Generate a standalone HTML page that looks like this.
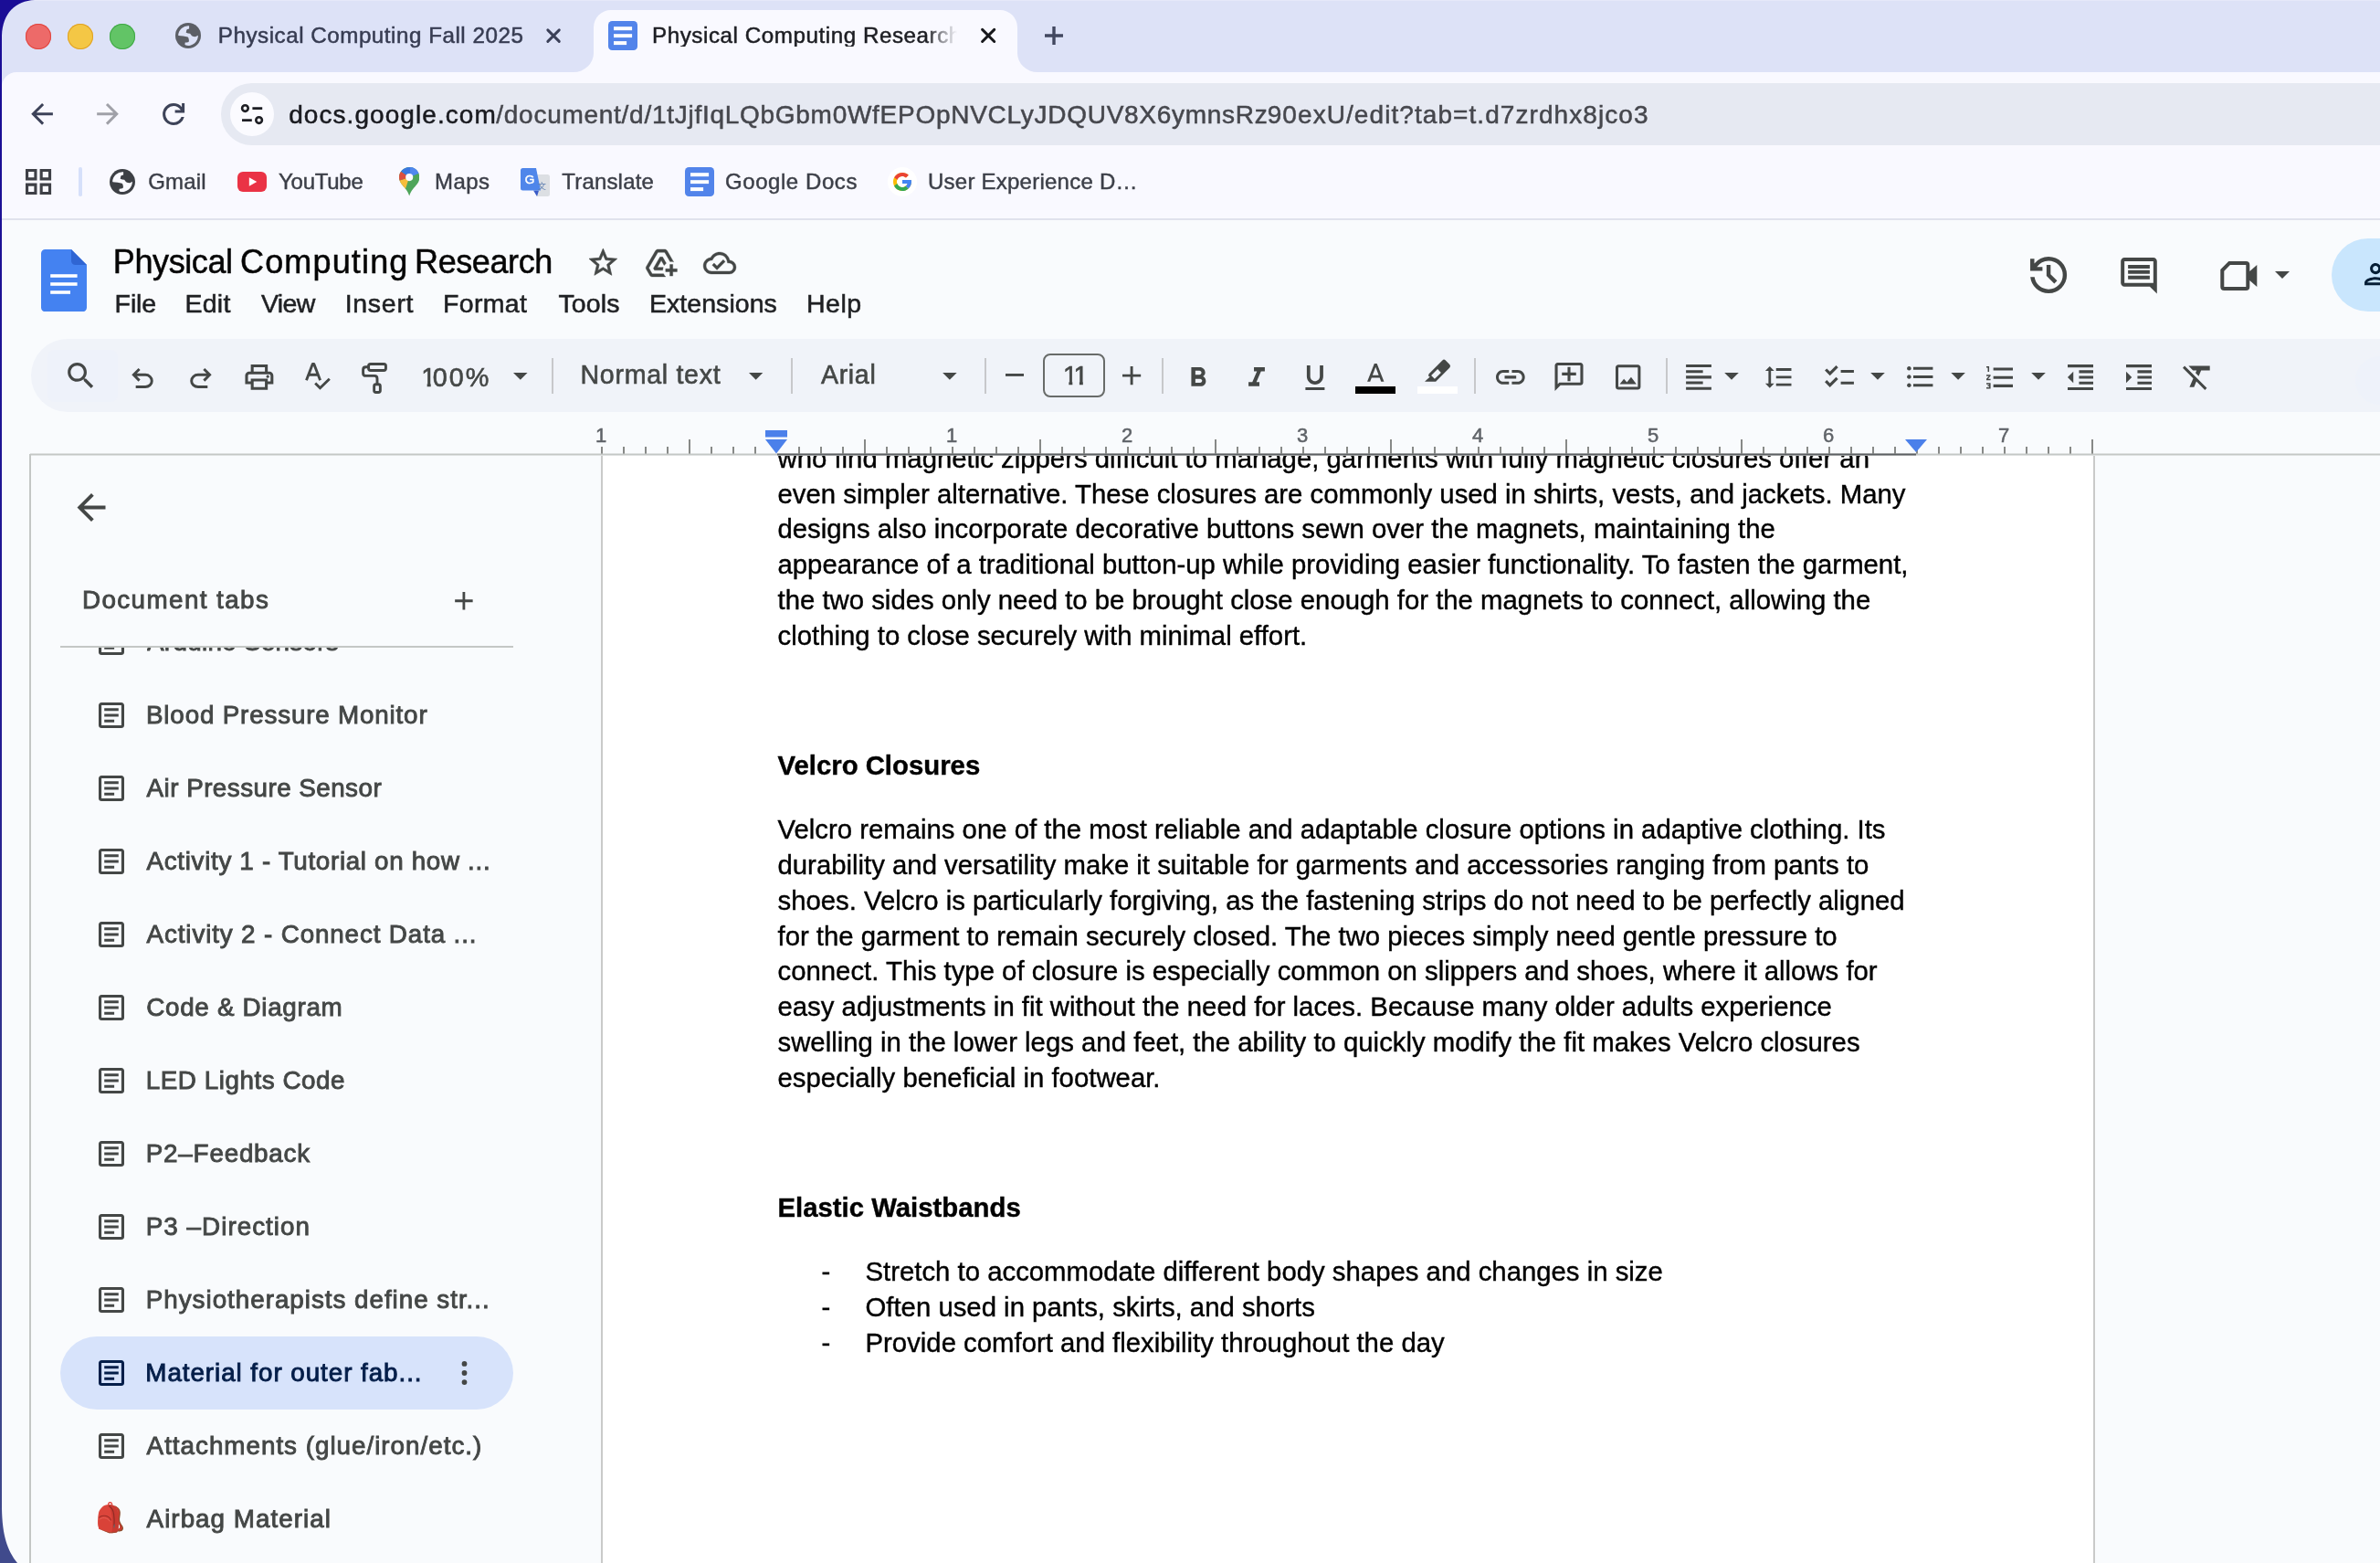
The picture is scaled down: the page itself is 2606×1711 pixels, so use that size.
<!DOCTYPE html>
<html lang="en"><head><meta charset="utf-8"><title>Physical Computing Research - Google Docs</title>
<style>
html,body{margin:0;padding:0}
body{width:2606px;height:1711px;overflow:hidden;position:relative;background:#f9fbfd;font-family:"Liberation Sans",sans-serif;}
.a{position:absolute}
.t{position:absolute;white-space:pre;line-height:1;font-family:"Liberation Sans",sans-serif;z-index:3}
.ic{position:absolute;z-index:3;overflow:visible}
svg{display:block}
.sep{top:391.500px;width:2px;height:39px;background:#c7c8cb}
#root{position:absolute;left:0;top:0;width:2606px;height:1711px;overflow:hidden;will-change:transform}

</style></head>
<body>
<div id="root">
<!-- chrome frame -->
<div class="a" style="left:0;top:0;width:2606px;height:110px;background:#dde2f7"></div>
<div class="a" style="left:2px;top:79px;width:2604px;height:162px;background:#f9f9ff;border-top-left-radius:16px"></div>
<!-- active tab -->
<svg class="a" style="left:626px;top:11px" width="512" height="68" viewBox="626 11 512 68"><path d="M628 79 A22 21 0 0 0 650 58 V30 A19 19 0 0 1 669 11 H1095 A19 19 0 0 1 1114 30 V58 A22 21 0 0 0 1136 79 Z" fill="#f9f9ff"/></svg>
<!-- traffic lights -->
<div class="a" style="left:28px;top:26px;width:28px;height:28px;border-radius:50%;background:#ed6a69;box-shadow:inset 0 0 0 1px #e0443e"></div>
<div class="a" style="left:74px;top:26px;width:28px;height:28px;border-radius:50%;background:#f4c745;box-shadow:inset 0 0 0 1px #dfa023"></div>
<div class="a" style="left:120px;top:26px;width:28px;height:28px;border-radius:50%;background:#62c466;box-shadow:inset 0 0 0 1px #3fa845"></div>
<!-- tab2 favicon (docs) -->
<svg class="a" style="left:666px;top:23px" width="32" height="32" viewBox="0 0 32 32"><rect width="32" height="32" rx="4.300" fill="#5284ea"/><rect x="6" y="6.200" width="20.100" height="4" fill="#fff"/><rect x="6" y="14.200" width="20.100" height="3.900" fill="#fff"/><rect x="6" y="22.100" width="14.100" height="4" fill="#fff"/></svg>
<!-- omnibox -->
<div class="a" style="left:242px;top:91px;width:2500px;height:67.500px;border-radius:33.750px;background:#e6e9f2"></div>
<div class="a" style="left:252px;top:101px;width:48px;height:48px;border-radius:50%;background:#fbfbff"></div>
<svg class="a" style="left:262px;top:111px" width="28" height="28" viewBox="262 111 28 28" fill="none" stroke="#1d1e24" stroke-width="2.600"><circle cx="268.400" cy="118.600" r="3.300"/><path d="M276.400 118.600H287.200M265 131.600H275.800"/><circle cx="283.600" cy="131.600" r="3.300"/></svg>
<!-- bookmarks bar -->
<div class="a" style="left:86.200px;top:183px;width:3.600px;height:32px;border-radius:1.800px;background:#d6e0fa"></div>
<div class="a" style="left:2px;top:239px;width:2604px;height:2px;background:#e0e2ec"></div>
<!-- bookmark favicons -->
<svg class="a" style="left:260px;top:188px" width="32" height="22" viewBox="0 0 32 22"><rect width="32" height="22" rx="6" fill="#ea3345"/><path d="M12.800 6.200 L21.300 11 L12.800 15.800Z" fill="#fff"/></svg>
<!-- maps pin -->
<svg class="a" style="left:436.800px;top:183px" width="22.400" height="31.600" viewBox="0 0 22.400 31.600"><defs><clipPath id="pin"><path d="M11.200 0C5 0 0 5 0 11.100c0 2.900 1.100 5.300 2.700 7.500 2.700 3.700 6.600 6.700 8.500 13 1.900-6.300 5.800-9.300 8.500-13 1.600-2.200 2.700-4.600 2.700-7.500C22.400 5 17.400 0 11.200 0z"/></clipPath></defs><g clip-path="url(#pin)"><rect width="22.400" height="31.600" fill="#4ea55a"/><path d="M11.200 11.100L-42.800 29.100L-1.100 48.300Z" fill="#f6bd3b"/><path d="M11.200 11.100L-33.800 -20.900L-42.800 29.100Z" fill="#dd4f3f"/><path d="M11.200 11.100L-33.800 -20.900L11 -30L58.200 -8.900Z" fill="#3a78e0"/><path d="M11.200 11.100L14.500 -20L58.200 -8.900Z" fill="#5088ee"/></g><circle cx="11.200" cy="11.100" r="4.050" fill="#fbfbff"/></svg>
<!-- translate -->
<svg class="a" style="left:570px;top:184px" width="32" height="31" viewBox="0 0 32 31"><path d="M11 7H29.500A2.500 2.500 0 0 1 32 9.500V28.500A2.500 2.500 0 0 1 29.500 31H18Z" fill="#dcdfe3"/><path d="M14 24.500L20 24.500 18 31Z" fill="#3a5bc7"/><path d="M2.500 0H17L22 24.500H2.500A2.500 2.500 0 0 1 0 22V2.500A2.500 2.500 0 0 1 2.500 0Z" fill="#4f86ea"/><text x="4.800" y="17" font-family="Liberation Sans, sans-serif" font-size="13.500" fill="#fff" stroke="#fff" stroke-width=".5">G</text><text x="18.500" y="22.500" font-family="Liberation Sans, Noto Sans CJK SC, sans-serif" font-size="9.500" fill="#5f7fb0">文</text></svg>
<!-- google docs bookmark -->
<svg class="a" style="left:750px;top:183px" width="32" height="32" viewBox="0 0 32 32"><rect width="32" height="32" rx="4.300" fill="#5284ea"/><rect x="6" y="6.200" width="20.100" height="4" fill="#fff"/><rect x="6" y="14.200" width="20.100" height="3.900" fill="#fff"/><rect x="6" y="22.100" width="14.100" height="4" fill="#fff"/></svg>
<!-- google G -->
<svg class="a" style="left:972px;top:183px" width="32" height="32" viewBox="0 0 32 32"><circle cx="16" cy="16" r="16" fill="#fff"/><g transform="translate(4 4) scale(.5)"><path d="M43.611 20.083H42V20H24v8h11.303c-1.649 4.657-6.080 8-11.303 8-6.627 0-12-5.373-12-12s5.373-12 12-12c3.059 0 5.842 1.154 7.961 3.039l5.657-5.657C34.046 6.053 29.268 4 24 4 12.955 4 4 12.955 4 24s8.955 20 20 20 20-8.955 20-20c0-1.341-.138-2.650-.389-3.917z" fill="#fbbc05"/><path d="M6.306 14.691l6.571 4.819C14.655 15.108 18.961 12 24 12c3.059 0 5.842 1.154 7.961 3.039l5.657-5.657C34.046 6.053 29.268 4 24 4 16.318 4 9.656 8.337 6.306 14.691z" fill="#ea4335"/><path d="M24 44c5.166 0 9.860-1.977 13.409-5.192l-6.190-5.238C29.211 35.091 26.715 36 24 36c-5.202 0-9.619-3.317-11.283-7.946l-6.522 5.025C9.505 39.556 16.227 44 24 44z" fill="#34a853"/><path d="M43.611 20.083H42V20H24v8h11.303c-.792 2.237-2.231 4.166-4.087 5.571l6.190 5.238C36.971 39.205 44 34 44 24c0-1.341-.138-2.650-.389-3.917z" fill="#4285f4"/></g></svg>
<!-- docs logo -->
<svg class="a" style="left:45px;top:272.700px" width="50" height="68.300" viewBox="0 0 50 68.300"><path d="M4.500 0H33L50 17V63.800A4.500 4.500 0 0 1 45.500 68.300H4.500A4.500 4.500 0 0 1 0 63.800V4.500A4.500 4.500 0 0 1 4.500 0Z" fill="#4482f1"/><path d="M33 0L50 17H37.500A4.500 4.500 0 0 1 33 12.500Z" fill="#2f65d3"/><rect x="10.200" y="27.200" width="29.400" height="3.600" fill="#fff"/><rect x="10.200" y="36.200" width="29.400" height="3.600" fill="#fff"/><rect x="10.200" y="45.200" width="21.800" height="3.600" fill="#fff"/></svg>
<!-- share button -->
<div class="a" style="left:2553px;top:261px;width:200px;height:80px;border-radius:40px;background:#c9e6fd"></div>
<svg class="ic" style="left:2582.850px;top:281.900px;width:36.300px;height:36.300px" viewBox="0 0 24 24" fill="#051e36"><path d="M12 6c1.100 0 2 .9 2 2s-.9 2-2 2-2-.9-2-2 .9-2 2-2m0 10c2.700 0 5.800 1.290 6 2H6c.230-.720 3.310-2 6-2m0-12C9.790 4 8 5.790 8 8s1.790 4 4 4 4-1.790 4-4-1.790-4-4-4zm0 10c-2.670 0-8 1.340-8 4v2h16v-2c0-2.660-5.330-4-8-4z"/></svg>
<!-- toolbar pill -->
<div class="a" style="left:34px;top:371px;width:2700px;height:80px;border-radius:40px;background:#f0f3f9"></div>
<div class="a" style="left:51.500px;top:383px;width:77px;height:56.500px;border-radius:8px;background:#eef2fa"></div>
<div class="a" style="left:2579px;top:390px;width:100px;height:53px;border-radius:26.500px;background:#eef2fa"></div>
<!-- toolbar separators -->
<div class="a sep" style="left:604px"></div><div class="a sep" style="left:866px"></div><div class="a sep" style="left:1078px"></div><div class="a sep" style="left:1272px"></div><div class="a sep" style="left:1614px"></div><div class="a sep" style="left:1824px"></div>
<!-- font size box -->
<div class="a" style="left:1142px;top:387px;width:68px;height:48px;box-sizing:border-box;border:2px solid #686b69;border-radius:8px"></div>
<!-- text colour / highlight bars -->
<div class="a" style="left:1484px;top:423px;width:44px;height:8px;background:#000"></div>
<div class="a" style="left:1552px;top:423px;width:44px;height:8px;background:#fff"></div>

<!-- page -->
<div class="a" style="left:657.500px;top:498.500px;width:1636.500px;height:1230px;box-sizing:border-box;background:#fff;border-left:2px solid #c9cac9;border-right:2px solid #c9cac9"></div>
<!-- sidebar left border -->
<div class="a" style="left:32px;top:497px;width:2px;height:1220px;background:#c4c7c5"></div>
<!-- sidebar divider -->
<div class="a" style="left:66px;top:707px;width:496px;height:2px;background:#c4c7c5"></div>
<!-- selected tab pill -->
<div class="a" style="left:66px;top:1463px;width:496px;height:80px;border-radius:40px;background:#d7e3fb"></div>
<svg class="a" style="left:0;top:451px;z-index:2" width="2606" height="50" viewBox="0 451 2606 50"><g fill="#7b7d7b"><rect x="658.1" y="489" width="1.800" height="8"/><rect x="682.1" y="489" width="1.800" height="8"/><rect x="706.1" y="489" width="1.800" height="8"/><rect x="730.1" y="489" width="1.800" height="8"/><rect x="754.1" y="481" width="1.800" height="16"/><rect x="778.1" y="489" width="1.800" height="8"/><rect x="802.1" y="489" width="1.800" height="8"/><rect x="826.1" y="489" width="1.800" height="8"/><rect x="874.1" y="489" width="1.800" height="8"/><rect x="898.1" y="489" width="1.800" height="8"/><rect x="922.1" y="489" width="1.800" height="8"/><rect x="946.1" y="481" width="1.800" height="16"/><rect x="970.1" y="489" width="1.800" height="8"/><rect x="994.1" y="489" width="1.800" height="8"/><rect x="1018.1" y="489" width="1.800" height="8"/><rect x="1042.1" y="489" width="1.800" height="8"/><rect x="1066.1" y="489" width="1.800" height="8"/><rect x="1090.1" y="489" width="1.800" height="8"/><rect x="1114.1" y="489" width="1.800" height="8"/><rect x="1138.1" y="481" width="1.800" height="16"/><rect x="1162.1" y="489" width="1.800" height="8"/><rect x="1186.1" y="489" width="1.800" height="8"/><rect x="1210.1" y="489" width="1.800" height="8"/><rect x="1234.1" y="489" width="1.800" height="8"/><rect x="1258.1" y="489" width="1.800" height="8"/><rect x="1282.1" y="489" width="1.800" height="8"/><rect x="1306.1" y="489" width="1.800" height="8"/><rect x="1330.1" y="481" width="1.800" height="16"/><rect x="1354.1" y="489" width="1.800" height="8"/><rect x="1378.1" y="489" width="1.800" height="8"/><rect x="1402.1" y="489" width="1.800" height="8"/><rect x="1426.1" y="489" width="1.800" height="8"/><rect x="1450.1" y="489" width="1.800" height="8"/><rect x="1474.1" y="489" width="1.800" height="8"/><rect x="1498.1" y="489" width="1.800" height="8"/><rect x="1522.1" y="481" width="1.800" height="16"/><rect x="1546.1" y="489" width="1.800" height="8"/><rect x="1570.1" y="489" width="1.800" height="8"/><rect x="1594.1" y="489" width="1.800" height="8"/><rect x="1618.1" y="489" width="1.800" height="8"/><rect x="1642.1" y="489" width="1.800" height="8"/><rect x="1666.1" y="489" width="1.800" height="8"/><rect x="1690.1" y="489" width="1.800" height="8"/><rect x="1714.1" y="481" width="1.800" height="16"/><rect x="1738.1" y="489" width="1.800" height="8"/><rect x="1762.1" y="489" width="1.800" height="8"/><rect x="1786.1" y="489" width="1.800" height="8"/><rect x="1810.1" y="489" width="1.800" height="8"/><rect x="1834.1" y="489" width="1.800" height="8"/><rect x="1858.1" y="489" width="1.800" height="8"/><rect x="1882.1" y="489" width="1.800" height="8"/><rect x="1906.1" y="481" width="1.800" height="16"/><rect x="1930.1" y="489" width="1.800" height="8"/><rect x="1954.1" y="489" width="1.800" height="8"/><rect x="1978.1" y="489" width="1.800" height="8"/><rect x="2002.1" y="489" width="1.800" height="8"/><rect x="2026.1" y="489" width="1.800" height="8"/><rect x="2050.1" y="489" width="1.800" height="8"/><rect x="2074.1" y="489" width="1.800" height="8"/><rect x="2098.1" y="481" width="1.800" height="16"/><rect x="2122.1" y="489" width="1.800" height="8"/><rect x="2146.1" y="489" width="1.800" height="8"/><rect x="2170.1" y="489" width="1.800" height="8"/><rect x="2194.1" y="489" width="1.800" height="8"/><rect x="2218.1" y="489" width="1.800" height="8"/><rect x="2242.1" y="489" width="1.800" height="8"/><rect x="2266.1" y="489" width="1.800" height="8"/><rect x="2290.1" y="481" width="1.800" height="16"/></g><rect x="33" y="496.500" width="2573" height="2" fill="#c4c7c5"/><rect x="851" y="496.500" width="1247" height="2" fill="#5d6063"/><rect x="838" y="471" width="24" height="7.500" fill="#4b80ea"/><path d="M838 481H862L850 496.500Z" fill="#4b80ea"/><path d="M2086 481H2110L2098 495Z" fill="#4b80ea"/></svg>
<!-- backpack emoji substitute -->
<svg class="a" style="left:105px;top:1642px;z-index:3" width="32" height="40" viewBox="0 0 32 40">
<path d="M20.600 6.200C24 7.500 26.600 10 26.800 13.500 27 17 25.600 20 26.200 23c.7 3 3.300 5 3.700 7.300.3 1.700-.5 3-1.600 3.600l-3.800.8-1-2.600c2.300-.7 3.300-1.700 2.600-3.600-1-2.700-3.200-4.800-3.600-8.200-.4-3.300 1.400-6.400.7-9.300-.4-1.500-1.500-2.600-3.200-3.400z" fill="#8a4a2a"/>
<path d="M21.500 7c2.300 1.300 4 3.300 4.200 6 .2 3.400-1.300 6.300-.7 9.600.6 3.200 3.200 5.300 3.600 7.600.2 1.200-.2 2-.9 2.600l-2.400.7-.6-1.700c1.700-.8 2.400-1.800 1.800-3.400-1-2.700-3.300-4.800-3.700-8.200-.4-3.300 1.300-6.300.8-9.100-.3-1.300-1-2.400-2.100-3.200z" fill="#cf3c32"/>
<path d="M13 5.600c-.3-2 .8-3.500 2.500-3.600 1.600-.1 2.700 1 2.800 3l-1.300.3c-.1-1.200-.6-1.900-1.500-1.800-.9.100-1.300.9-1.200 2z" fill="#e2483f"/>
<path d="M6.900 7.800C9 5.700 11.800 4.800 14.600 5c2.500.1 4.800.8 6.400 2.100 1.800 1.600 2.600 4.200 2.900 7 .5 4.600 1 9.400.9 14.100 0 2.700-.4 5.400-1.700 7-2.600.9-5.700 1.300-8.500 1.100L3.400 31.700C2.300 28.800 2 25.800 2.100 22.900c.1-3 .3-6 .9-8.800.5-2.400 2-4.500 3.900-6.300z" fill="#dc453b"/>
<path d="M14.600 5c2.500.1 4.800.8 6.400 2.100 1.800 1.600 2.600 4.200 2.900 7 .5 4.600 1 9.400.9 14.100 0 2.700-.4 5.400-1.700 7-1.800.6-3.900 1-6 1.100.9-4.600 1.300-9.500.9-14.300C17.600 17 16.800 11 14.600 5z" fill="#c83a31"/>
<path d="M14 6.600c3 1.600 5 5 5.600 9 .6 4 .7 8.400.3 12.500" stroke="#8e2a25" stroke-width="1.100" fill="none"/>
<path d="M3.300 19.500c1.500-1.700 4-2.500 6.400-2.200 3.300.4 6 2.300 6.900 5 .8 4 .8 8.300.5 12.300L3.400 31.700C2.400 27.700 2.300 23.400 3.300 19.500z" fill="#d94238"/>
<path d="M3.300 19.500c1.500-1.700 4-2.500 6.400-2.200 3.300.4 6 2.300 6.900 5" stroke="#9c2e28" stroke-width="1.100" fill="none"/>
<path d="M3.800 21.500c1.400-1.400 3.500-2 5.600-1.800 2.700.3 5 1.700 6 3.800" stroke="#e8675c" stroke-width="1" fill="none" opacity=".8"/>
<path d="M19.800 26.500l1.100.2-.5 3.800-1.100-.2z" fill="#60646a"/>
<path d="M3.400 31.700l11.200 4.600c2.800.2 5.900-.2 8.500-1.100l1.200-1.200c-2.500 1.200-6 1.600-9.500 1.300z" fill="#8a4a2a" opacity=".85"/>
</svg>
<!-- desktop edge + window corners -->
<div class="a" style="left:0;top:0;width:2px;height:1711px;z-index:9;background:linear-gradient(180deg,#1a0d96 0%,#231a93 45%,#3a4189 80%,#404a8c 100%)"></div>
<svg class="a" style="left:0;top:0;z-index:9" width="44" height="44" viewBox="0 0 44 44"><path d="M0 0H38C17 1 3 14 2 39V44H0Z" fill="#1a0d96"/></svg>
<svg class="a" style="left:0;top:1651px;z-index:9" width="30" height="60" viewBox="0 0 30 60"><path d="M0 0H2C2.500 30 8 46 19 60H0Z" fill="#404a8c"/></svg>

<!-- custom toolbar icons: spellcheck + paint format -->
<svg class="ic" style="left:330px;top:392px" width="100" height="44" viewBox="330 392 100 44" fill="none" stroke="#444746" stroke-width="2.900">
<path d="M335.500 416.300 L342.300 398.500 H343.800 L350.600 416.300 M338.300 410.300 H347.800" stroke-linejoin="round"/>
<path d="M345.200 419.400 L350.500 424.800 L360.800 414.700"/>
<rect x="403.550" y="398.550" width="18.900" height="6.900" rx="2.200"/>
<path d="M403.500 401.800 H400.600 Q397.600 401.800 397.600 404.800 V408.400 Q397.600 411.400 400.600 411.400 H410 Q413 411.400 413 414.400 V420"/>
<rect x="409.650" y="420.750" width="6.700" height="8.700" rx="2"/>
</svg>
<svg class="ic" style="left:1555px;top:390px" width="40" height="32" viewBox="1555 390 40 32"><path fill="#444746" fill-rule="evenodd" d="M1560 417.800L1572.100 417.800L1587.300 402.400Q1588.900 400.600 1587.300 399L1582.600 394.300Q1581 392.900 1579.400 394.400L1564.400 409.400L1564.100 411.700L1565.700 412.600Z M1567.100 410.900L1574.100 404.100L1577.900 407.900L1570.900 414.700Z"/></svg>

<div class="a" style="left:0;top:0;width:2606px;height:1px;background:#e6e9f9"></div>
<svg class="ic" style="left:590px;top:20px" width="600" height="40" viewBox="590 20 600 40" fill="none" stroke-linecap="round">
<path d="M599.800 32.900 L612.300 45.400 M612.300 32.900 L599.800 45.400" stroke="#3b4058" stroke-width="2.900"/>
<path d="M1075.600 32.400 L1088.700 45.500 M1088.700 32.400 L1075.600 45.500" stroke="#17181c" stroke-width="3"/>
<path d="M1144 39 H1164 M1154 29.100 V48.900" stroke="#424860" stroke-width="3.400" stroke-linecap="butt"/>
</svg>

<!-- icons -->
<svg class="ic" style="left:192.00px;top:25.00px;width:28.00px;height:28.00px;" viewBox="-14.000 -14.000 28.000 28.000" fill="#5c5f66"><circle cx="0" cy="0" r="14"/><path fill="#dde2f7" d="M-10.800 -0.300 A10.900 10.900 0 0 1 1.100 -10.800 L1.100 -7.600 Q-1.300 -7.400 -1.700 -6.300 L-2.300 -3.200 Q0 -2.200 2.100 -2.200 Q3.200 -1 4 0.300 Q6.500 1.400 8.400 1.100 L10.900 -0.300 A10.900 10.900 0 0 1 -2.600 10.600 L-3.600 9.800 L-3.300 7.600 Q-1.200 7.600 0.500 6.900 Q1.200 5.600 0.800 4.400 Q0.600 2.400 -0.400 1.600 Q-5 0.300 -10.500 0.100 Z"/></svg>
<svg class="ic" style="left:33.90px;top:113.10px;width:24.10px;height:23.70px;" viewBox="4.000 4.000 16.000 16.000" fill="#3c4258"><path d="M20 11H7.83l5.59-5.59L12 4l-8 8 8 8 1.41-1.41L7.83 13H20v-2z"/></svg>
<svg class="ic" style="left:105.90px;top:113.10px;width:24.00px;height:23.70px;" viewBox="4.000 4.000 16.000 16.000" fill="#a0a1a8"><path d="M12 4l-1.41 1.41L16.17 11H4v2h12.17l-5.58 5.59L12 20l8-8z"/></svg>
<svg class="ic" style="left:178.00px;top:112.80px;width:24.20px;height:24.00px;" viewBox="160.000 -800.000 640.000 640.000" fill="#3d4358"><path d="M480-160q-134 0-227-93t-93-227q0-134 93-227t227-93q69 0 132 28.500T720-690v-110h80v280H520v-80h168q-32-56-87.500-88T480-720q-100 0-170 70t-70 170q0 100 70 170t170 70q77 0 139-44t87-116h84q-28 106-114 173t-196 67Z"/></svg>
<svg class="ic" style="left:28.00px;top:184.90px;width:28.10px;height:28.10px;" viewBox="3.000 3.000 18.000 18.000" fill="#3e4046"><path d="M3 3v8h8V3H3zm6 6H5V5h4v4zm-6 4v8h8v-8H3zm6 6H5v-4h4v4zm4-16v8h8V3h-8zm6 6h-4V5h4v4zm-6 4v8h8v-8h-8zm6 6h-4v-4h4v4z"/></svg>
<svg class="ic" style="left:120.00px;top:184.90px;width:28.00px;height:28.10px;" viewBox="-14.000 -14.000 28.000 28.000" fill="#3d4045"><circle cx="0" cy="0" r="14"/><path fill="#f9f9ff" d="M-10.800 -0.300 A10.900 10.900 0 0 1 1.100 -10.800 L1.100 -7.600 Q-1.300 -7.400 -1.700 -6.300 L-2.300 -3.200 Q0 -2.200 2.100 -2.200 Q3.200 -1 4 0.300 Q6.500 1.400 8.400 1.100 L10.900 -0.300 A10.900 10.900 0 0 1 -2.600 10.600 L-3.600 9.800 L-3.300 7.600 Q-1.200 7.600 0.500 6.900 Q1.200 5.600 0.800 4.400 Q0.600 2.400 -0.400 1.600 Q-5 0.300 -10.500 0.100 Z"/></svg>
<svg class="ic" style="left:644.70px;top:272.20px;width:30.70px;height:29.40px;stroke:#444746;stroke-width:0.45;" viewBox="2.000 2.000 20.000 19.000" fill="#444746"><path d="M22 9.24l-7.19-.62L12 2 9.19 8.63 2 9.24l5.46 4.73L5.82 21 12 17.27 18.18 21l-1.63-7.03L22 9.24zM12 15.4l-3.76 2.27 1-4.28-3.32-2.88 4.38-.38L12 6.1l1.71 4.04 4.38.38-3.32 2.88 1 4.28L12 15.4z"/></svg>
<svg class="ic" style="left:707.10px;top:273.00px;width:34.70px;height:29.90px;stroke:#444746;stroke-width:0.25;" viewBox="1.305 2.500 21.695 19.000" fill="#444746"><path d="M20 21v-3h3v-2h-3v-3h-2v3h-3v2h3v3h2zm-4.970.5H5.660c-.72 0-1.380-.380-1.730-1L1.570 16.400c-.360-.620-.350-1.380.010-2L7.920 3.490C8.280 2.880 8.940 2.500 9.650 2.500h4.700c.71 0 1.370.38 1.730.990l4.480 7.710c-.5-.130-1.020-.2-1.560-.2-.28 0-.56.020-.84.060L14.350 4.500h-4.700L3.310 15.410l2.350 4.090h7.890c.35.77.85 1.450 1.480 2zM13.340 15c-.22.630-.34 1.300-.34 2H7.250l-.73-1.270 4.580-7.980h1.800l2.530 4.420c-.56.42-1.050.93-1.440 1.510l-2-3.490L9.250 15h4.090z"/></svg>
<svg class="ic" style="left:769.90px;top:276.00px;width:36.10px;height:23.90px;stroke:#444746;stroke-width:0.25;" viewBox="0.000 4.000 24.000 16.000" fill="#444746"><path d="M19.35 10.04C18.67 6.59 15.64 4 12 4 9.110 4 6.600 5.640 5.350 8.040 2.340 8.360 0 10.910 0 14c0 3.310 2.690 6 6 6h13c2.760 0 5-2.240 5-5 0-2.640-2.050-4.780-4.650-4.960zM19 18H6c-2.210 0-4-1.790-4-4 0-2.050 1.530-3.760 3.560-3.970l1.070-.110.5-.95C8.080 7.140 9.940 6 12 6c2.620 0 4.880 1.860 5.390 4.430l.3 1.500 1.530.110c1.560.1 2.780 1.410 2.780 2.960 0 1.650-1.350 3-3 3zm-9-3.820l-2.090-2.090L6.500 13.500 10 17l6.010-6.010-1.410-1.410z"/></svg>
<svg class="ic" style="left:2222.80px;top:280.80px;width:40.20px;height:40.10px;" viewBox="120.000 -840.000 720.000 720.000" fill="#444746"><path d="M480-120q-138 0-240.500-91.500T122-440h82q14 104 92.500 172T480-200q117 0 198.500-81.500T760-480q0-117-81.500-198.500T480-760q-69 0-129 32t-101 88h110v80H120v-240h80v94q51-64 124.500-99T480-840q75 0 140.500 28.500t114 77q48.500 48.500 77 114T840-480q0 75-28.500 140.500t-77 114q-48.500 48.500-114 77T480-120Zm112-192L440-464v-216h80v184l128 128-56 56Z"/></svg>
<svg class="ic" style="left:2322.00px;top:281.80px;width:40.00px;height:39.60px;" viewBox="2.000 2.000 20.000 20.000" fill="#444746"><path d="M21.99 4c0-1.1-.89-2-1.99-2H4c-1.1 0-2 .9-2 2v12c0 1.1.9 2 2 2h14l4 4-.01-18zM20 4v12H4V4h16zM6 12h12v2H6zm0-3h12v2H6zm0-3h12v2H6z"/></svg>
<svg class="ic" style="left:2430.70px;top:286.00px;width:40.60px;height:32.00px;" viewBox="2.000 4.000 20.000 16.000" fill="#444746"><path fill-rule="evenodd" d="M6.5 4H16a2 2 0 0 1 2 2v3.5l4-3.5v12l-4-3.500V18a2 2 0 0 1-2 2H4a2 2 0 0 1-2-2V8.500L6.500 4zm.83 2L4 9.330V18h12V6H7.330z"/></svg>
<svg class="ic" style="left:2491.00px;top:297.00px;width:16.00px;height:8.00px;" viewBox="7.000 10.000 10.000 5.000" fill="#444746"><path d="M7 10l5 5 5-5z"/></svg>
<svg class="ic" style="left:73.70px;top:397.00px;width:28.30px;height:28.00px;" viewBox="3.000 3.000 17.490 17.490" fill="#444746"><path d="M15.5 14h-.79l-.28-.27C15.41 12.59 16 11.11 16 9.5 16 5.91 13.09 3 9.5 3S3 5.91 3 9.5 5.91 16 9.5 16c1.61 0 3.09-.59 4.23-1.57l.27.28v.79l5 4.99L20.49 19l-4.99-5zm-6 0C7.01 14 5 11.99 5 9.5S7.01 5 9.5 5 14 7.01 14 9.5 11.99 14 9.5 14z"/></svg>
<svg class="ic" style="left:144.00px;top:403.00px;width:24.00px;height:22.00px;" viewBox="160.000 -800.000 640.000 600.000" fill="#444746"><path d="M280-200v-80h284q63 0 109.5-40T720-420q0-60-46.5-100T564-560H312l104 104-56 56-200-200 200-200 56 56-104 104h252q97 0 166.5 63T800-420q0 94-69.5 157T564-200H280Z"/></svg>
<svg class="ic" style="left:207.80px;top:403.00px;width:23.90px;height:22.00px;" viewBox="160.000 -800.000 640.000 600.000" fill="#444746"><path d="M396-200q-97 0-166.5-63T160-420q0-94 69.5-157T396-640h252L544-744l56-56 200 200-200 200-56-56 104-104H396q-63 0-109.5 40T240-420q0 60 46.5 100T396-280h284v80H396Z"/></svg>
<svg class="ic" style="left:268.00px;top:399.00px;width:31.80px;height:27.80px;" viewBox="2.000 3.000 20.000 18.000" fill="#444746"><path d="M19 8h-1V3H6v5H5c-1.66 0-3 1.34-3 3v6h4v4h12v-4h4v-6c0-1.66-1.34-3-3-3zM8 5h8v3H8V5zm8 14H8v-4h8v4zm2-4v-2H6v2H4v-4c0-.55.45-1 1-1h14c.55 0 1 .45 1 1v4h-2z"/><circle cx="18" cy="11.5" r="1"/></svg>
<svg class="ic" style="left:562.20px;top:408.10px;width:15.60px;height:7.80px;" viewBox="7.000 10.000 10.000 5.000" fill="#444746"><path d="M7 10l5 5 5-5z"/></svg>
<svg class="ic" style="left:820.00px;top:408.10px;width:15.30px;height:7.80px;" viewBox="7.000 10.000 10.000 5.000" fill="#444746"><path d="M7 10l5 5 5-5z"/></svg>
<svg class="ic" style="left:1031.80px;top:408.10px;width:15.80px;height:7.80px;" viewBox="7.000 10.000 10.000 5.000" fill="#444746"><path d="M7 10l5 5 5-5z"/></svg>
<svg class="ic" style="left:1101.00px;top:409.30px;width:20.00px;height:2.90px;" viewBox="5.000 11.000 14.000 2.000" fill="#444746"><rect x="5" y="11" width="14" height="2"/></svg>
<svg class="ic" style="left:1228.80px;top:400.50px;width:20.20px;height:20.20px;" viewBox="5.000 5.000 14.000 14.000" fill="#444746"><path d="M19 13h-6v6h-2v-6H5v-2h6V5h2v6h6v2z"/></svg>
<svg class="ic" style="left:1303.50px;top:401.80px;width:16.80px;height:20.80px;" viewBox="7.000 4.000 10.750 14.000" fill="#444746"><path d="M15.6 10.79c.97-.67 1.65-1.77 1.65-2.79 0-2.26-1.75-4-4-4H7v14h7.04c2.09 0 3.71-1.7 3.71-3.79 0-1.52-.86-2.82-2.15-3.42zM10 6.5h3c.83 0 1.5.67 1.5 1.5s-.67 1.5-1.5 1.5h-3v-3zm3.5 9H10v-3h3.5c.83 0 1.5.67 1.5 1.5s-.67 1.5-1.5 1.5z"/></svg>
<svg class="ic" style="left:1366.00px;top:401.80px;width:20.00px;height:20.80px;" viewBox="6.000 4.000 12.000 14.000" fill="#444746"><path d="M10 4v3h2.21l-3.42 8H6v3h8v-3h-2.21l3.42-8H18V4z"/></svg>
<svg class="ic" style="left:1428.00px;top:400.00px;width:23.80px;height:27.00px;" viewBox="5.000 3.000 14.000 18.000" fill="#444746"><path d="M12 17c3.31 0 6-2.69 6-6V3h-2.5v8c0 1.93-1.57 3.5-3.5 3.5S8.5 12.93 8.5 11V3H6v8c0 3.31 2.69 6 6 6zm-7 2v2h14v-2H5z"/></svg>
<svg class="ic" style="left:1496.80px;top:397.60px;width:18.50px;height:19.80px;" viewBox="5.500 3.000 12.990 14.000" fill="#444746"><path d="M11 3L5.5 17h2.25l1.12-3h6.25l1.12 3h2.25L13 3h-2zm-1.38 9L12 5.67 14.38 12H9.62z"/></svg>
<svg class="ic" style="left:1638.00px;top:404.00px;width:31.70px;height:17.80px;" viewBox="2.000 7.000 20.000 10.000" fill="#444746"><path d="M3.9 12c0-1.71 1.39-3.1 3.1-3.1h4V7H7c-2.76 0-5 2.24-5 5s2.24 5 5 5h4v-1.9H7c-1.71 0-3.1-1.39-3.1-3.1zM8 13h8v-2H8v2zm9-6h-4v1.9h4c1.71 0 3.1 1.39 3.1 3.1s-1.39 3.1-3.1 3.1h-4V17h4c2.76 0 5-2.24 5-5s-2.24-5-5-5z"/></svg>
<svg class="ic" style="left:1702.00px;top:397.00px;width:32.00px;height:31.00px;" viewBox="2.000 2.000 20.000 20.000" fill="#444746"><path d="M2 4c0-1.1.9-2 2-2h16c1.1 0 2 .9 2 2v12c0 1.1-.9 2-2 2H6l-4 4V4zm2 13.17L5.17 16H20V4H4v13.17zM11 5h2v4h4v2h-4v4h-2v-4H7V9h4z"/></svg>
<svg class="ic" style="left:1769.40px;top:399.00px;width:27.40px;height:27.80px;" viewBox="3.000 3.000 18.000 18.000" fill="#444746"><path d="M19 5v14H5V5h14m0-2H5c-1.1 0-2 .9-2 2v14c0 1.1.9 2 2 2h14c1.1 0 2-.9 2-2V5c0-1.1-.9-2-2-2zm-4.86 8.86l-3 3.87L9 13.14 6 17h12l-3.86-5.14z"/></svg>
<svg class="ic" style="left:1846.00px;top:399.00px;width:28.00px;height:27.80px;" viewBox="3.000 3.000 18.000 18.000" fill="#444746"><path d="M15 15H3v2h12v-2zm0-8H3v2h12V7zM3 13h18v-2H3v2zm0 8h18v-2H3v2zM3 3v2h18V3H3z"/></svg>
<svg class="ic" style="left:1888.00px;top:408.10px;width:16.00px;height:7.80px;" viewBox="7.000 10.000 10.000 5.000" fill="#444746"><path d="M7 10l5 5 5-5z"/></svg>
<svg class="ic" style="left:1930.60px;top:401.00px;width:32.40px;height:23.70px;" viewBox="1.500 3.500 20.500 17.000" fill="#444746"><path d="M6 7h2.5L5 3.5 1.5 7H4v10H1.5L5 20.5 8.5 17H6V7zm4-2v2h12V5H10zm0 14h12v-2H10v2zm0-6h12v-2H10v2z"/></svg>
<svg class="ic" style="left:1998.00px;top:400.00px;width:32.00px;height:24.00px;" viewBox="2.000 3.930 20.000 15.070" fill="#444746"><path d="M22 7h-9v2h9V7zm0 8h-9v2h9v-2zM5.54 11L2 7.46l1.41-1.41 2.12 2.12 4.24-4.24 1.41 1.41L5.54 11zm0 8L2 15.46l1.41-1.41 2.12 2.12 4.24-4.24 1.41 1.41L5.54 19z"/></svg>
<svg class="ic" style="left:2048.00px;top:408.10px;width:16.00px;height:7.80px;" viewBox="7.000 10.000 10.000 5.000" fill="#444746"><path d="M7 10l5 5 5-5z"/></svg>
<svg class="ic" style="left:2087.50px;top:401.00px;width:28.50px;height:23.00px;" viewBox="2.500 4.500 18.500 15.000" fill="#444746"><path d="M4 10.5c-.83 0-1.5.67-1.5 1.5s.67 1.5 1.5 1.5 1.5-.67 1.5-1.5-.67-1.5-1.5-1.5zm0-6c-.83 0-1.5.67-1.5 1.5S3.17 7.5 4 7.5 5.5 6.83 5.5 6 4.83 4.5 4 4.5zm0 12c-.83 0-1.5.68-1.5 1.5s.68 1.5 1.5 1.5 1.5-.68 1.5-1.5-.67-1.5-1.5-1.5zM7 19h14v-2H7v2zm0-6h14v-2H7v2zm0-8v2h14V5H7z"/></svg>
<svg class="ic" style="left:2135.80px;top:408.10px;width:16.20px;height:7.80px;" viewBox="7.000 10.000 10.000 5.000" fill="#444746"><path d="M7 10l5 5 5-5z"/></svg>
<svg class="ic" style="left:2175.00px;top:398.60px;width:29.00px;height:28.40px;" viewBox="2.000 4.000 19.000 16.000" fill="#444746"><path d="M2 17h2v.5H3v1h1v.5H2v1h3v-4H2v1zm1-9h1V4H2v1h1v3zm-1 3h1.8L2 13.1v.9h3v-1H3.2L5 10.9V10H2v1zm5-6v2h14V5H7zm0 14h14v-2H7v2zm0-6h14v-2H7v2z"/></svg>
<svg class="ic" style="left:2224.00px;top:408.10px;width:16.00px;height:7.80px;" viewBox="7.000 10.000 10.000 5.000" fill="#444746"><path d="M7 10l5 5 5-5z"/></svg>
<svg class="ic" style="left:2264.00px;top:398.60px;width:28.00px;height:28.10px;" viewBox="3.000 3.000 18.000 18.000" fill="#444746"><path d="M11 17h10v-2H11v2zm-8-5l4 4V8l-4 4zm0 9h18v-2H3v2zM3 3v2h18V3H3zm8 6h10V7H11v2zm0 4h10v-2H11v2z"/></svg>
<svg class="ic" style="left:2328.00px;top:398.60px;width:28.00px;height:28.10px;" viewBox="3.000 3.000 18.000 18.000" fill="#444746"><path d="M3 21h18v-2H3v2zM3 8v8l4-4-4-4zm8 9h10v-2H11v2zM3 3v2h18V3H3zm8 6h10V7H11v2zm0 4h10v-2H11v2z"/></svg>
<svg class="ic" style="left:2390.00px;top:399.00px;width:29.70px;height:29.50px;" viewBox="2.000 5.000 18.000 16.000" fill="#444746"><path d="M3.27 5L2 6.27l6.97 6.97L6.5 19h3l1.57-3.66L16.73 21 18 19.73 3.55 5.27 3.27 5zM6 5v.18L8.82 8h2.4l-.72 1.68 2.1 2.1L14.21 8H20V5H6z"/></svg>
<svg class="ic" style="left:84.00px;top:539.60px;width:32.00px;height:31.00px;" viewBox="4.000 4.000 16.000 16.000" fill="#444746"><path d="M20 11H7.83l5.59-5.59L12 4l-8 8 8 8 1.41-1.41L7.83 13H20v-2z"/></svg>
<svg class="ic" style="left:498.00px;top:647.50px;width:19.80px;height:19.50px;" viewBox="5.000 5.000 14.000 14.000" fill="#444746"><path d="M19 13h-6v6h-2v-6H5v-2h6V5h2v6h6v2z"/></svg>
<svg class="ic" style="left:503.70px;top:1490.00px;width:9.00px;height:26.00px;" viewBox="10.000 3.000 4.000 18.000" fill="#444746"><circle cx="12" cy="5" r="2"/><circle cx="12" cy="12" r="2"/><circle cx="12" cy="19" r="2"/></svg>
<svg class="ic" style="left:108.00px;top:689.00px;width:28.00px;height:28.00px;clip-path:inset(20.0px 0 0 0);" viewBox="3.000 3.000 18.000 18.000" fill="#444746"><path d="M19 5v14H5V5h14m0-2H5c-1.100 0-2 .9-2 2v14c0 1.100.9 2 2 2h14c1.100 0 2-.9 2-2V5c0-1.100-.9-2-2-2zM14 17H7v-2h7v2zm3-4H7v-2h10v2zm0-4H7V7h10v2z"/></svg>
<svg class="ic" style="left:108.00px;top:769.00px;width:28.00px;height:28.00px;" viewBox="3.000 3.000 18.000 18.000" fill="#444746"><path d="M19 5v14H5V5h14m0-2H5c-1.100 0-2 .9-2 2v14c0 1.100.9 2 2 2h14c1.100 0 2-.9 2-2V5c0-1.100-.9-2-2-2zM14 17H7v-2h7v2zm3-4H7v-2h10v2zm0-4H7V7h10v2z"/></svg>
<svg class="ic" style="left:108.00px;top:849.00px;width:28.00px;height:28.00px;" viewBox="3.000 3.000 18.000 18.000" fill="#444746"><path d="M19 5v14H5V5h14m0-2H5c-1.100 0-2 .9-2 2v14c0 1.100.9 2 2 2h14c1.100 0 2-.9 2-2V5c0-1.100-.9-2-2-2zM14 17H7v-2h7v2zm3-4H7v-2h10v2zm0-4H7V7h10v2z"/></svg>
<svg class="ic" style="left:108.00px;top:929.00px;width:28.00px;height:28.00px;" viewBox="3.000 3.000 18.000 18.000" fill="#444746"><path d="M19 5v14H5V5h14m0-2H5c-1.100 0-2 .9-2 2v14c0 1.100.9 2 2 2h14c1.100 0 2-.9 2-2V5c0-1.100-.9-2-2-2zM14 17H7v-2h7v2zm3-4H7v-2h10v2zm0-4H7V7h10v2z"/></svg>
<svg class="ic" style="left:108.00px;top:1009.00px;width:28.00px;height:28.00px;" viewBox="3.000 3.000 18.000 18.000" fill="#444746"><path d="M19 5v14H5V5h14m0-2H5c-1.100 0-2 .9-2 2v14c0 1.100.9 2 2 2h14c1.100 0 2-.9 2-2V5c0-1.100-.9-2-2-2zM14 17H7v-2h7v2zm3-4H7v-2h10v2zm0-4H7V7h10v2z"/></svg>
<svg class="ic" style="left:108.00px;top:1089.00px;width:28.00px;height:28.00px;" viewBox="3.000 3.000 18.000 18.000" fill="#444746"><path d="M19 5v14H5V5h14m0-2H5c-1.100 0-2 .9-2 2v14c0 1.100.9 2 2 2h14c1.100 0 2-.9 2-2V5c0-1.100-.9-2-2-2zM14 17H7v-2h7v2zm3-4H7v-2h10v2zm0-4H7V7h10v2z"/></svg>
<svg class="ic" style="left:108.00px;top:1169.00px;width:28.00px;height:28.00px;" viewBox="3.000 3.000 18.000 18.000" fill="#444746"><path d="M19 5v14H5V5h14m0-2H5c-1.100 0-2 .9-2 2v14c0 1.100.9 2 2 2h14c1.100 0 2-.9 2-2V5c0-1.100-.9-2-2-2zM14 17H7v-2h7v2zm3-4H7v-2h10v2zm0-4H7V7h10v2z"/></svg>
<svg class="ic" style="left:108.00px;top:1249.00px;width:28.00px;height:28.00px;" viewBox="3.000 3.000 18.000 18.000" fill="#444746"><path d="M19 5v14H5V5h14m0-2H5c-1.100 0-2 .9-2 2v14c0 1.100.9 2 2 2h14c1.100 0 2-.9 2-2V5c0-1.100-.9-2-2-2zM14 17H7v-2h7v2zm3-4H7v-2h10v2zm0-4H7V7h10v2z"/></svg>
<svg class="ic" style="left:108.00px;top:1329.00px;width:28.00px;height:28.00px;" viewBox="3.000 3.000 18.000 18.000" fill="#444746"><path d="M19 5v14H5V5h14m0-2H5c-1.100 0-2 .9-2 2v14c0 1.100.9 2 2 2h14c1.100 0 2-.9 2-2V5c0-1.100-.9-2-2-2zM14 17H7v-2h7v2zm3-4H7v-2h10v2zm0-4H7V7h10v2z"/></svg>
<svg class="ic" style="left:108.00px;top:1409.00px;width:28.00px;height:28.00px;" viewBox="3.000 3.000 18.000 18.000" fill="#444746"><path d="M19 5v14H5V5h14m0-2H5c-1.100 0-2 .9-2 2v14c0 1.100.9 2 2 2h14c1.100 0 2-.9 2-2V5c0-1.100-.9-2-2-2zM14 17H7v-2h7v2zm3-4H7v-2h10v2zm0-4H7V7h10v2z"/></svg>
<svg class="ic" style="left:108.00px;top:1489.00px;width:28.00px;height:28.00px;" viewBox="3.000 3.000 18.000 18.000" fill="#041e49"><path d="M19 5v14H5V5h14m0-2H5c-1.100 0-2 .9-2 2v14c0 1.100.9 2 2 2h14c1.100 0 2-.9 2-2V5c0-1.100-.9-2-2-2zM14 17H7v-2h7v2zm3-4H7v-2h10v2zm0-4H7V7h10v2z"/></svg>
<svg class="ic" style="left:108.00px;top:1569.00px;width:28.00px;height:28.00px;" viewBox="3.000 3.000 18.000 18.000" fill="#444746"><path d="M19 5v14H5V5h14m0-2H5c-1.100 0-2 .9-2 2v14c0 1.100.9 2 2 2h14c1.100 0 2-.9 2-2V5c0-1.100-.9-2-2-2zM14 17H7v-2h7v2zm3-4H7v-2h10v2zm0-4H7V7h10v2z"/></svg>
<!-- text layer -->
<span class="t " style="left:238.80px;top:27px;font-size:24.2px;color:#373c52;letter-spacing:0.521px;-webkit-text-stroke:0.5px #373c52;">Physical Computing Fall 2025 </span><span class="t " style="left:714.00px;top:27px;font-size:24.2px;color:#1c1d22;letter-spacing:0.550px;-webkit-text-stroke:0.5px #1c1d22;width:336px;overflow:hidden;-webkit-mask-image:linear-gradient(90deg,#000 0,#000 300px,transparent 334px);mask-image:linear-gradient(90deg,#000 0,#000 300px,transparent 334px);">Physical Computing Research </span><span class="t" style="left:316.20px;top:112px;font-size:28px;"><span style="display:inline-block;color:#191a1f;letter-spacing:1.067px;-webkit-text-stroke:0.5px #191a1f;">docs.google.com</span><span style="display:inline-block;color:#46474d;letter-spacing:0.727px;-webkit-text-stroke:0.5px #46474d;margin-left:-0.59px;">/document/d/1tJjfIqLQbGbm0WfEPOpNVCLyJDQUV8X6ymnsRz</span><span style="display:inline-block;color:#46474d;letter-spacing:1.073px;-webkit-text-stroke:0.5px #46474d;margin-left:-0.83px;">90exU/edit?tab=t.d7zrdhx8jco3 </span></span><span class="t " style="left:162.20px;top:187px;font-size:24px;color:#3c3f48;letter-spacing:0.190px;-webkit-text-stroke:0.45px #3c3f48;">Gmail </span><span class="t " style="left:305.00px;top:187px;font-size:24px;color:#3c3f48;letter-spacing:-0.261px;-webkit-text-stroke:0.45px #3c3f48;">YouTube </span><span class="t " style="left:476.00px;top:187px;font-size:24px;color:#3c3f48;letter-spacing:0.438px;-webkit-text-stroke:0.45px #3c3f48;">Maps </span><span class="t " style="left:615.30px;top:187px;font-size:24px;color:#3c3f48;letter-spacing:0.174px;-webkit-text-stroke:0.45px #3c3f48;">Translate </span><span class="t " style="left:794.00px;top:187px;font-size:24px;color:#3c3f48;letter-spacing:0.566px;-webkit-text-stroke:0.45px #3c3f48;">Google Docs </span><span class="t " style="left:1016.00px;top:187px;font-size:24px;color:#3c3f48;letter-spacing:0.241px;-webkit-text-stroke:0.45px #3c3f48;">User Experience D… </span><span class="t" style="left:123.80px;top:269px;font-size:36px;"><span style="display:inline-block;color:#060606;letter-spacing:-0.393px;-webkit-text-stroke:0.5px #060606;">Physical </span><span style="display:inline-block;color:#060606;letter-spacing:1.153px;-webkit-text-stroke:0.5px #060606;margin-left:-1.31px;">Computing </span><span style="display:inline-block;color:#060606;letter-spacing:-0.407px;-webkit-text-stroke:0.5px #060606;margin-left:-4.63px;">Research </span></span><span class="t " style="left:125.60px;top:318px;font-size:28.5px;color:#1f2023;letter-spacing:-0.124px;-webkit-text-stroke:0.55px #1f2023;">File </span><span class="t " style="left:202.40px;top:318px;font-size:28.5px;color:#1f2023;letter-spacing:0.270px;-webkit-text-stroke:0.55px #1f2023;">Edit </span><span class="t " style="left:286.00px;top:318px;font-size:28.5px;color:#1f2023;letter-spacing:-0.626px;-webkit-text-stroke:0.55px #1f2023;">View </span><span class="t " style="left:377.70px;top:318px;font-size:28.5px;color:#1f2023;letter-spacing:0.708px;-webkit-text-stroke:0.55px #1f2023;">Insert </span><span class="t " style="left:485.00px;top:318px;font-size:28.5px;color:#1f2023;letter-spacing:0.332px;-webkit-text-stroke:0.55px #1f2023;">Format </span><span class="t " style="left:611.40px;top:318px;font-size:28.5px;color:#1f2023;letter-spacing:0.154px;-webkit-text-stroke:0.55px #1f2023;">Tools </span><span class="t " style="left:711.00px;top:318px;font-size:28.5px;color:#1f2023;letter-spacing:0.049px;-webkit-text-stroke:0.55px #1f2023;">Extensions </span><span class="t " style="left:883.00px;top:318px;font-size:28.5px;color:#1f2023;letter-spacing:0.479px;-webkit-text-stroke:0.55px #1f2023;">Help </span><span class="t" style="left:461.20px;top:399px;font-size:28.8px;"><span style="display:inline-block;color:#444746;-webkit-text-stroke:0.6px #444746;clip-path:polygon(0 0,10.500px 0,10.500px 30px,6.500px 30px,6.500px 12px,0 12px);">1</span><span style="display:inline-block;color:#444746;letter-spacing:1.985px;-webkit-text-stroke:0.6px #444746;margin-left:-3.52px;">00% </span></span><span class="t " style="left:635.50px;top:396px;font-size:28.6px;color:#444746;letter-spacing:0.696px;-webkit-text-stroke:0.6px #444746;">Normal text </span><span class="t " style="left:899.00px;top:396px;font-size:28.6px;color:#444746;letter-spacing:0.638px;-webkit-text-stroke:0.6px #444746;">Arial </span><span class="t" style="left:1163.90px;top:397px;font-size:28.6px;"><span style="display:inline-block;color:#444746;-webkit-text-stroke:0.6px #444746;clip-path:polygon(0 0,10.400px 0,10.400px 30px,6.500px 30px,6.500px 12px,0 12px);">1</span><span style="display:inline-block;color:#444746;-webkit-text-stroke:0.6px #444746;clip-path:polygon(0 0,10.400px 0,10.400px 30px,6.500px 30px,6.500px 12px,0 12px);margin-left:-4.40px;">1 </span></span><span class="t rl" style="left:648.00px;top:466px;font-size:22px;color:#5f6368;-webkit-text-stroke:0.5px #5f6368;width:20px;text-align:center;">1</span><span class="t rl" style="left:1032.00px;top:466px;font-size:22px;color:#5f6368;-webkit-text-stroke:0.5px #5f6368;width:20px;text-align:center;">1</span><span class="t rl" style="left:1224.00px;top:466px;font-size:22px;color:#5f6368;-webkit-text-stroke:0.5px #5f6368;width:20px;text-align:center;">2</span><span class="t rl" style="left:1416.00px;top:466px;font-size:22px;color:#5f6368;-webkit-text-stroke:0.5px #5f6368;width:20px;text-align:center;">3</span><span class="t rl" style="left:1608.00px;top:466px;font-size:22px;color:#5f6368;-webkit-text-stroke:0.5px #5f6368;width:20px;text-align:center;">4</span><span class="t rl" style="left:1800.00px;top:466px;font-size:22px;color:#5f6368;-webkit-text-stroke:0.5px #5f6368;width:20px;text-align:center;">5</span><span class="t rl" style="left:1992.00px;top:466px;font-size:22px;color:#5f6368;-webkit-text-stroke:0.5px #5f6368;width:20px;text-align:center;">6</span><span class="t rl" style="left:2184.00px;top:466px;font-size:22px;color:#5f6368;-webkit-text-stroke:0.5px #5f6368;width:20px;text-align:center;">7</span><span class="t " style="left:89.90px;top:643px;font-size:27.8px;color:#444746;letter-spacing:1.421px;-webkit-text-stroke:0.9px #444746;">Document tabs </span><span class="t " style="left:161.00px;top:689px;font-size:27.8px;color:#444746;letter-spacing:0.300px;-webkit-text-stroke:0.9px #444746;clip-path:inset(20px -20px -20px 0);">Arduino Sensors </span><span class="t " style="left:160.00px;top:769px;font-size:27.8px;color:#444746;letter-spacing:0.819px;-webkit-text-stroke:0.9px #444746;">Blood Pressure Monitor </span><span class="t " style="left:160.60px;top:849px;font-size:27.8px;color:#444746;letter-spacing:0.463px;-webkit-text-stroke:0.9px #444746;">Air Pressure Sensor </span><span class="t " style="left:160.60px;top:929px;font-size:27.8px;color:#444746;letter-spacing:0.668px;-webkit-text-stroke:0.9px #444746;">Activity 1 - Tutorial on how ... </span><span class="t " style="left:160.60px;top:1009px;font-size:27.8px;color:#444746;letter-spacing:0.862px;-webkit-text-stroke:0.9px #444746;">Activity 2 - Connect Data ... </span><span class="t " style="left:160.30px;top:1089px;font-size:27.8px;color:#444746;letter-spacing:0.691px;-webkit-text-stroke:0.9px #444746;">Code &amp; Diagram </span><span class="t " style="left:159.80px;top:1169px;font-size:27.8px;color:#444746;letter-spacing:0.537px;-webkit-text-stroke:0.9px #444746;">LED Lights Code </span><span class="t " style="left:159.80px;top:1249px;font-size:27.8px;color:#444746;letter-spacing:0.787px;-webkit-text-stroke:0.9px #444746;">P2–Feedback </span><span class="t " style="left:159.80px;top:1329px;font-size:27.8px;color:#444746;letter-spacing:1.025px;-webkit-text-stroke:0.9px #444746;">P3 –Direction </span><span class="t " style="left:159.80px;top:1409px;font-size:27.8px;color:#444746;letter-spacing:0.975px;-webkit-text-stroke:0.9px #444746;">Physiotherapists define str... </span><span class="t " style="left:159.30px;top:1489px;font-size:27.8px;color:#041e49;letter-spacing:0.941px;-webkit-text-stroke:0.9px #041e49;">Material for outer fab... </span><span class="t " style="left:160.60px;top:1569px;font-size:27.8px;color:#444746;letter-spacing:0.991px;-webkit-text-stroke:0.9px #444746;">Attachments (glue/iron/etc.) </span><span class="t " style="left:160.60px;top:1649px;font-size:27.8px;color:#444746;letter-spacing:1.024px;-webkit-text-stroke:0.9px #444746;">Airbag Material </span><span class="t b" style="left:851.50px;top:487px;font-size:29.333px;color:#000;-webkit-text-stroke:0.4px #000;clip-path:inset(12px -20px -20px 0);">who find magnetic zippers difficult to manage, garments with fully magnetic closures offer an </span><span class="t b" style="left:851.50px;top:526px;font-size:29.333px;color:#000;-webkit-text-stroke:0.4px #000;">even simpler alternative. These closures are commonly used in shirts, vests, and jackets. Many </span><span class="t b" style="left:851.50px;top:564px;font-size:29.333px;color:#000;-webkit-text-stroke:0.4px #000;">designs also incorporate decorative buttons sewn over the magnets, maintaining the </span><span class="t b" style="left:851.50px;top:603px;font-size:29.333px;color:#000;-webkit-text-stroke:0.4px #000;">appearance of a traditional button-up while providing easier functionality. To fasten the garment, </span><span class="t b" style="left:851.50px;top:642px;font-size:29.333px;color:#000;-webkit-text-stroke:0.4px #000;">the two sides only need to be brought close enough for the magnets to connect, allowing the </span><span class="t b" style="left:851.50px;top:681px;font-size:29.333px;color:#000;-webkit-text-stroke:0.4px #000;">clothing to close securely with minimal effort. </span><span class="t b" style="left:851.50px;top:823px;font-size:29.333px;color:#000;font-weight:bold;-webkit-text-stroke:0.4px #000;">Velcro Closures </span><span class="t b" style="left:851.50px;top:893px;font-size:29.333px;color:#000;-webkit-text-stroke:0.4px #000;">Velcro remains one of the most reliable and adaptable closure options in adaptive clothing. Its </span><span class="t b" style="left:851.50px;top:932px;font-size:29.333px;color:#000;-webkit-text-stroke:0.4px #000;">durability and versatility make it suitable for garments and accessories ranging from pants to </span><span class="t b" style="left:851.50px;top:971px;font-size:29.333px;color:#000;-webkit-text-stroke:0.4px #000;">shoes. Velcro is particularly forgiving, as the fastening strips do not need to be perfectly aligned </span><span class="t b" style="left:851.50px;top:1010px;font-size:29.333px;color:#000;-webkit-text-stroke:0.4px #000;">for the garment to remain securely closed. The two pieces simply need gentle pressure to </span><span class="t b" style="left:851.50px;top:1048px;font-size:29.333px;color:#000;-webkit-text-stroke:0.4px #000;">connect. This type of closure is especially common on slippers and shoes, where it allows for </span><span class="t b" style="left:851.50px;top:1087px;font-size:29.333px;color:#000;-webkit-text-stroke:0.4px #000;">easy adjustments in fit without the need for laces. Because many older adults experience </span><span class="t b" style="left:851.50px;top:1126px;font-size:29.333px;color:#000;-webkit-text-stroke:0.4px #000;">swelling in the lower legs and feet, the ability to quickly modify the fit makes Velcro closures </span><span class="t b" style="left:851.50px;top:1165px;font-size:29.333px;color:#000;-webkit-text-stroke:0.4px #000;">especially beneficial in footwear. </span><span class="t b" style="left:851.50px;top:1307px;font-size:29.333px;color:#000;font-weight:bold;-webkit-text-stroke:0.4px #000;">Elastic Waistbands </span><span class="t b" style="left:899.50px;top:1377px;font-size:29.333px;color:#000;-webkit-text-stroke:0.4px #000;">- </span><span class="t b" style="left:947.50px;top:1377px;font-size:29.333px;color:#000;-webkit-text-stroke:0.4px #000;">Stretch to accommodate different body shapes and changes in size </span><span class="t b" style="left:899.50px;top:1416px;font-size:29.333px;color:#000;-webkit-text-stroke:0.4px #000;">- </span><span class="t b" style="left:947.50px;top:1416px;font-size:29.333px;color:#000;-webkit-text-stroke:0.4px #000;">Often used in pants, skirts, and shorts </span><span class="t b" style="left:899.50px;top:1455px;font-size:29.333px;color:#000;-webkit-text-stroke:0.4px #000;">- </span><span class="t b" style="left:947.50px;top:1455px;font-size:29.333px;color:#000;-webkit-text-stroke:0.4px #000;">Provide comfort and flexibility throughout the day </span>
</div>
</body></html>
